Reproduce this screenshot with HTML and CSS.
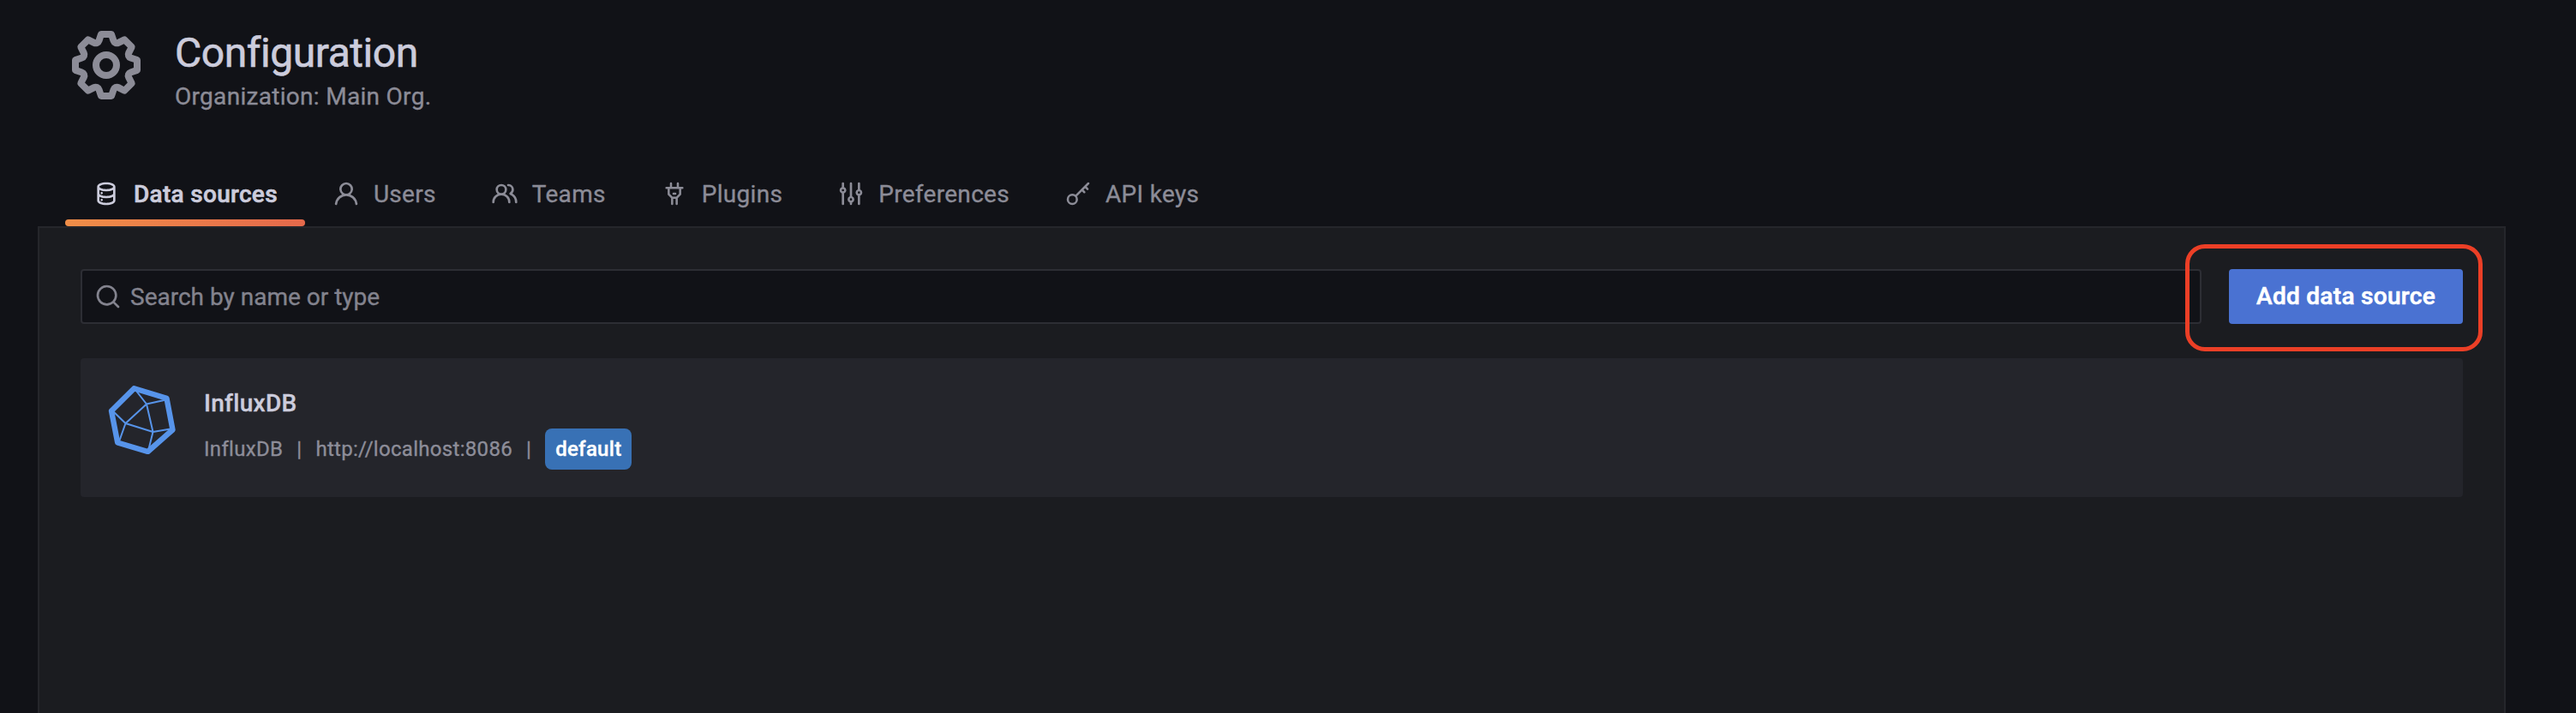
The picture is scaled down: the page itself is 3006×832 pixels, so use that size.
FILE: index.html
```html
<!DOCTYPE html>
<html lang="en">
<head>
<meta charset="utf-8">
<title>Configuration</title>
<link rel="stylesheet" href="styles.css">
</head>
<body>
<header class="page-header">
  <svg class="page-icon" viewBox="0 0 24 24"><path d="M21.32,9.55l-1.89-.63.89-1.78A1,1,0,0,0,20.13,6L18,3.87a1,1,0,0,0-1.15-.19l-1.78.89-.63-1.89A1,1,0,0,0,13.5,2h-3a1,1,0,0,0-.95.68L8.92,4.57,7.14,3.68A1,1,0,0,0,6,3.87L3.87,6a1,1,0,0,0-.19,1.15l.89,1.78-1.89.63A1,1,0,0,0,2,10.5v3a1,1,0,0,0,.68.95l1.89.63-.89,1.78A1,1,0,0,0,3.87,18L6,20.13a1,1,0,0,0,1.15.19l1.78-.89.63,1.89a1,1,0,0,0,.95.68h3a1,1,0,0,0,.95-.68l.63-1.89,1.78.89A1,1,0,0,0,18,20.13L20.13,18a1,1,0,0,0,.19-1.15l-.89-1.78,1.89-.63A1,1,0,0,0,22,13.5v-3A1,1,0,0,0,21.32,9.55ZM20,12.78l-1.2.4A2,2,0,0,0,17.64,16l.57,1.14-1.1,1.1L16,17.64a2,2,0,0,0-2.79,1.16l-.4,1.2H11.22l-.4-1.2A2,2,0,0,0,8,17.64l-1.14.57-1.1-1.1L6.36,16A2,2,0,0,0,5.2,13.18L4,12.78V11.22l1.2-.4A2,2,0,0,0,6.36,8L5.79,6.89l1.1-1.1L8,6.36A2,2,0,0,0,10.82,5.2l.4-1.2h1.56l.4,1.2A2,2,0,0,0,16,6.36l1.14-.57,1.1,1.1L17.64,8a2,2,0,0,0,1.16,2.79l1.2.4ZM12,8a4,4,0,1,0,4,4A4,4,0,0,0,12,8Zm0,6a2,2,0,1,1,2-2A2,2,0,0,1,12,14Z"/></svg>
  <div class="page-heading">
    <h1 class="page-title">Configuration</h1>
    <div class="page-subtitle">Organization: Main Org.</div>
  </div>
</header>
<nav class="tabs">
  <a class="tab tab-active"><svg class="icon" viewBox="0 0 24 24"><path d="M8,16.5a1,1,0,1,0,1,1A1,1,0,0,0,8,16.5ZM12,2C8,2,4,3.37,4,6V18c0,2.63,4,4,8,4s8-1.37,8-4V6C20,3.37,16,2,12,2Zm6,16c0,.71-2.28,2-6,2s-6-1.29-6-2V14.73A13.16,13.16,0,0,0,12,16a13.16,13.16,0,0,0,6-1.27Zm0-6c0,.71-2.28,2-6,2s-6-1.29-6-2V8.73A13.16,13.16,0,0,0,12,10a13.16,13.16,0,0,0,6-1.27ZM12,8C8.28,8,6,6.71,6,6s2.28-2,6-2,6,1.29,6,2S15.72,8,12,8ZM8,10.5a1,1,0,1,0,1,1A1,1,0,0,0,8,10.5Z"/></svg><span>Data sources</span></a>
  <a class="tab"><svg class="icon" viewBox="0 0 24 24"><path d="M15.71,12.71a6,6,0,1,0-7.42,0,10,10,0,0,0-6.22,8.18,1,1,0,0,0,2,.22,8,8,0,0,1,15.9,0,1,1,0,0,0,1,.89h.11a1,1,0,0,0,.88-1.1A10,10,0,0,0,15.71,12.71ZM12,12a4,4,0,1,1,4-4A4,4,0,0,1,12,12Z"/></svg><span>Users</span></a>
  <a class="tab"><svg class="icon" viewBox="0 0 24 24"><path d="M12.3,12.22A4.92,4.92,0,0,0,14,8.5a5,5,0,0,0-10,0,4.92,4.92,0,0,0,1.7,3.72A8,8,0,0,0,1,19.5a1,1,0,0,0,2,0,6,6,0,0,1,12,0,1,1,0,0,0,2,0A8,8,0,0,0,12.3,12.22ZM9,11.5a3,3,0,1,1,3-3A3,3,0,0,1,9,11.5Zm9.74.32A5,5,0,0,0,15,3.5a1,1,0,0,0,0,2,3,3,0,0,1,3,3,3,3,0,0,1-1.5,2.59,1,1,0,0,0-.5.84,1,1,0,0,0,.45.86l.39.26.13.07a7,7,0,0,1,4,6.38,1,1,0,0,0,2,0A9,9,0,0,0,18.74,11.82Z"/></svg><span>Teams</span></a>
  <a class="tab"><svg class="icon icon-line" viewBox="0 0 24 24"><path d="M9 3v4M15 3v4M5 7h14M7 7v5.5l2.9 3h4.2L17 12.5V7M10 15.5V21M14 15.5V21M11.2 12h1.6"/></svg><span>Plugins</span></a>
  <a class="tab"><svg class="icon" viewBox="0 0 24 24"><path d="M20,8.18V3a1,1,0,0,0-2,0V8.18a3,3,0,0,0,0,5.64V21a1,1,0,0,0,2,0V13.82a3,3,0,0,0,0-5.64ZM19,12a1,1,0,1,1,1-1A1,1,0,0,1,19,12Zm-6,2.18V3a1,1,0,0,0-2,0V14.18a3,3,0,0,0,0,5.64V21a1,1,0,0,0,2,0V19.82a3,3,0,0,0,0-5.64ZM12,18a1,1,0,1,1,1-1A1,1,0,0,1,12,18ZM6,6.18V3A1,1,0,0,0,4,3V6.18a3,3,0,0,0,0,5.64V21a1,1,0,0,0,2,0V11.82A3,3,0,0,0,6,6.18ZM5,10A1,1,0,1,1,6,9,1,1,0,0,1,5,10Z"/></svg><span>Preferences</span></a>
  <a class="tab"><svg class="icon icon-line" viewBox="0 0 24 24"><circle cx="7" cy="17" r="4"/><path d="M9.9 14.1L21 3M18.2 5.8l2.1 2.1M15.4 8.6l2.1 2.1"/></svg><span>API keys</span></a>
</nav>
<main class="panel">
  <div class="toolbar">
    <div class="search"><svg class="icon" viewBox="0 0 24 24"><path d="M21.71,20.29,18,16.61A9,9,0,1,0,16.61,18l3.68,3.68a1,1,0,0,0,1.42,0A1,1,0,0,0,21.71,20.29ZM11,18a7,7,0,1,1,7-7A7,7,0,0,1,11,18Z"/></svg><span>Search by name or type</span></div>
    <div class="action"><button class="button">Add data source</button><div class="highlight"></div></div>
  </div>
  <article class="card">
    <svg class="logo" viewBox="0 0 80 80"><path class="logo-edge" d="M30.5 3.2L68.5 14.8L75.500 51.5L46.5 77L11.2 66.5L4 29.5Z"/><path class="logo-facet" d="M30.5 3L45 21.5L70 16M45 21.5L20.5 44L52.5 54L45 21.5M4 28L20.5 44L12 68M52.5 54L76 50M52.5 54L46.5 78"/></svg>
    <div class="card-body">
      <h2 class="card-title">InfluxDB</h2>
      <div class="meta"><span>InfluxDB</span><span class="separator">|</span><span>http://localhost:8086</span><span class="separator">|</span><span class="badge">default</span></div>
    </div>
  </article>
</main>
</body>
</html>
```

FILE: styles.css
```css
* { box-sizing: border-box; }
body {
  margin: 0;
  height: 832px;
  overflow: hidden;
  display: flex;
  flex-direction: column;
  background: #111217;
  color: #ccccdc;
  font-family: Roboto, sans-serif;
  font-size: 28px;
  line-height: 44px;
  letter-spacing: 0.3px;
  -webkit-text-stroke: 0.35px currentColor;
}
svg { display: block; flex: none; fill: currentColor; }
.page-header {
  display: flex;
  height: 188px;
  padding: 28px 76px 0;
  gap: 32px;
  color: #8c8c97;
}
.page-icon { width: 96px; height: 96px; }
.page-title {
  margin: 5px 0 0;
  color: #ccccdc;
  font-size: 48px;
  font-weight: 400;
  line-height: 58px;
  letter-spacing: -0.45px;
  -webkit-text-stroke-width: 0.6px;
}
.page-subtitle { white-space: nowrap; }
.tabs { display: flex; height: 76px; padding-left: 76px; color: #8c8c97; }
.tab {
  position: relative;
  display: flex;
  align-items: center;
  gap: 16px;
  height: 76px;
  padding: 0 32px;
  white-space: nowrap;
}
.tab span, .search span { padding-top: 2px; }
.icon { width: 32px; height: 32px; }
.icon-line {
  fill: none;
  stroke: currentColor;
  stroke-width: 1.9;
  stroke-linecap: round;
  stroke-linejoin: round;
}
.tab-active { color: #ccccdc; font-weight: 500; -webkit-text-stroke-width: 0.6px; }
.tab-active::after {
  content: "";
  position: absolute;
  left: 0;
  right: 0;
  bottom: 0;
  height: 8px;
  border-radius: 4px;
  background: linear-gradient(90deg, #f08e48, #e5694b);
}
.panel {
  flex: 1;
  margin: 0 82px 0 44px;
  padding: 48px 48px 0;
  border: 2px solid #25262b;
  border-bottom: 0;
  background: #1b1c20;
}
.toolbar { display: flex; gap: 32px; margin-bottom: 40px; }
.search {
  flex: 1;
  display: flex;
  align-items: center;
  gap: 10px;
  height: 64px;
  padding: 0 14px;
  border: 2px solid #2d2e34;
  border-radius: 4px;
  background: #111217;
  color: #83838e;
  letter-spacing: 0;
}
.action { position: relative; }
.button {
  width: 273px;
  height: 64px;
  padding: 0;
  border: 0;
  border-radius: 4px;
  background: #4a72d2;
  color: #fff;
  font: 500 28px/64px Roboto, sans-serif;
  letter-spacing: 0.3px;
  -webkit-text-stroke-width: 0.6px;
}
.highlight {
  position: absolute;
  inset: -29px -23px -32px -51px;
  border: 5px solid #ec3f26;
  border-radius: 23px;
}
.card {
  display: flex;
  gap: 32px;
  height: 162px;
  padding: 32px;
  border-radius: 4px;
  background: #24252b;
}
.logo { width: 80px; height: 80px; color: #5794ea; fill: none; stroke: currentColor; stroke-linejoin: round; }
.logo-edge { stroke-width: 6.4; }
.logo-facet { stroke-width: 2; }
.card-title { margin: -1px 0 7px; font-size: 28px; font-weight: 500; line-height: 44px; }
.meta { display: flex; align-items: center; height: 48px; color: #8d8d99; font-size: 24px; }
.separator { margin: 0 16px; }
.badge {
  height: 48px;
  padding: 0 12px;
  border-radius: 8px;
  background: #3871b5;
  color: #fff;
  font-weight: 500;
  line-height: 48px;
}
```
